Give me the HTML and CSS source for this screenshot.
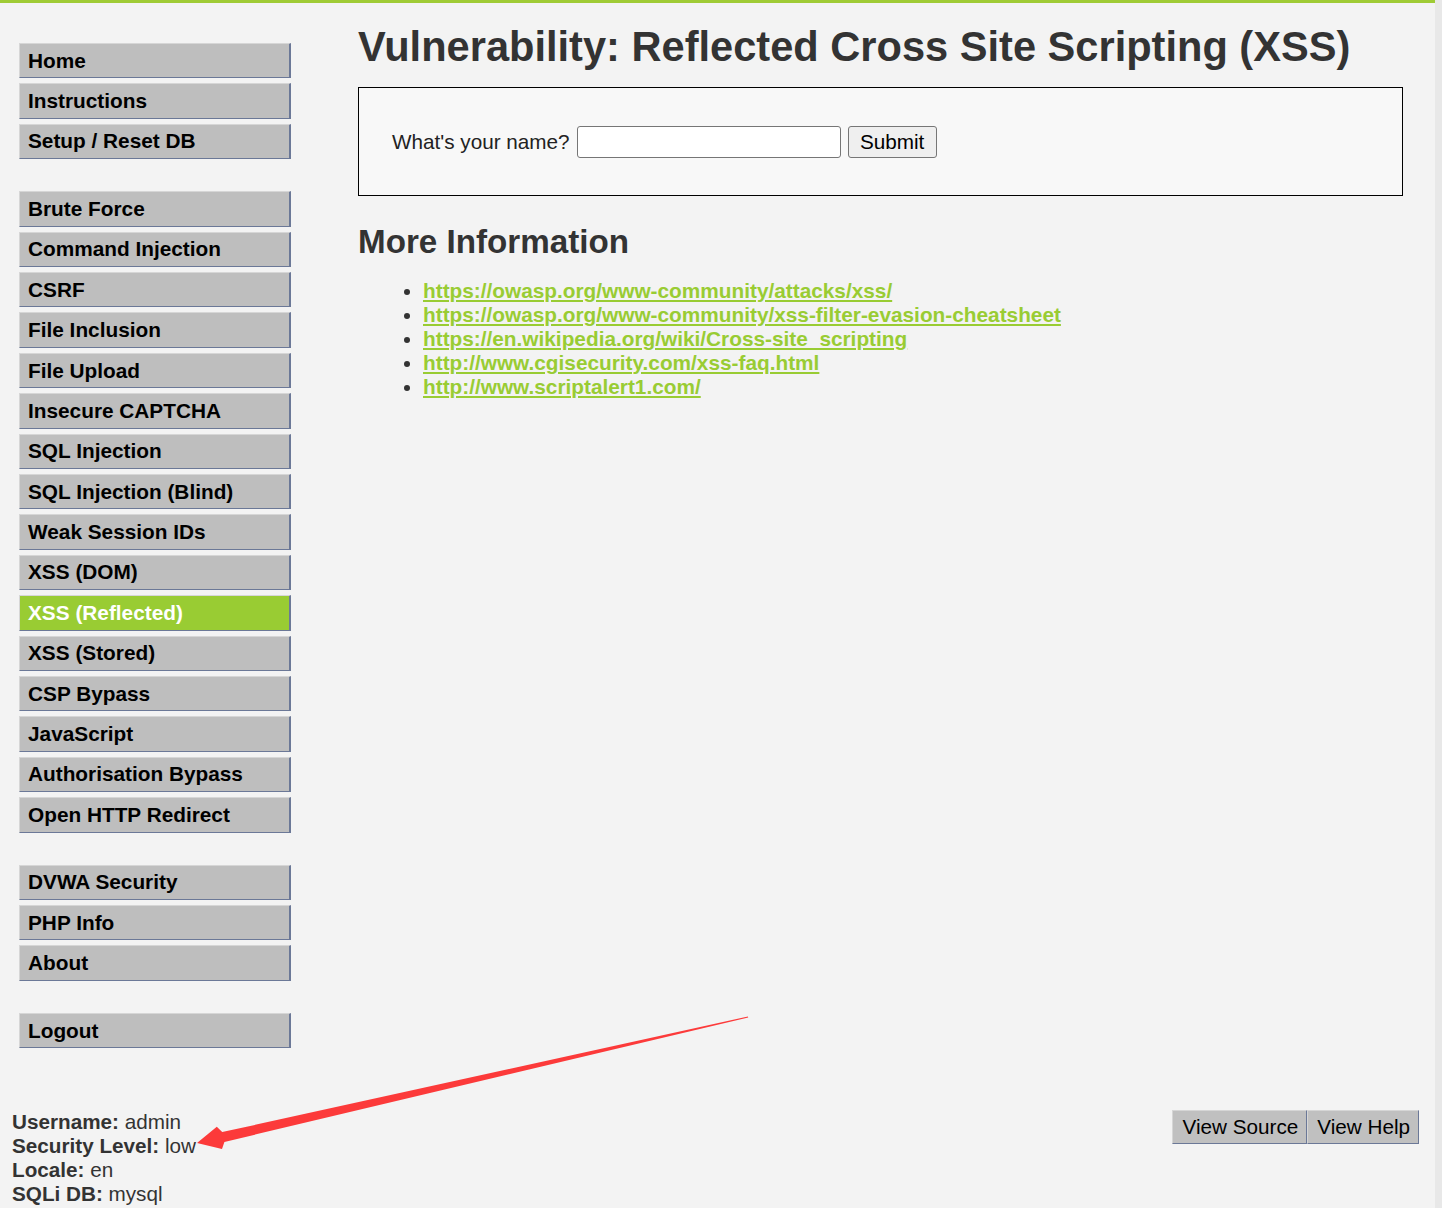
FILE: index.html
```html
<!DOCTYPE html>
<html lang="en">
<head>
<meta charset="utf-8">
<title>Vulnerability: Reflected Cross Site Scripting (XSS)</title>
<link rel="stylesheet" href="styles.css">
</head>
<body>
<div class="page">
  <div class="topbar"></div>
  <div class="main">
    <nav class="sidebar">
      <ul class="menu">
        <li><a href="#">Home</a></li>
        <li><a href="#">Instructions</a></li>
        <li><a href="#">Setup / Reset DB</a></li>
      </ul>
      <ul class="menu">
        <li><a href="#">Brute Force</a></li>
        <li><a href="#">Command Injection</a></li>
        <li><a href="#">CSRF</a></li>
        <li><a href="#">File Inclusion</a></li>
        <li><a href="#">File Upload</a></li>
        <li><a href="#">Insecure CAPTCHA</a></li>
        <li><a href="#">SQL Injection</a></li>
        <li><a href="#">SQL Injection (Blind)</a></li>
        <li><a href="#">Weak Session IDs</a></li>
        <li><a href="#">XSS (DOM)</a></li>
        <li><a href="#" class="selected">XSS (Reflected)</a></li>
        <li><a href="#">XSS (Stored)</a></li>
        <li><a href="#">CSP Bypass</a></li>
        <li><a href="#">JavaScript</a></li>
        <li><a href="#">Authorisation Bypass</a></li>
        <li><a href="#">Open HTTP Redirect</a></li>
      </ul>
      <ul class="menu">
        <li><a href="#">DVWA Security</a></li>
        <li><a href="#">PHP Info</a></li>
        <li><a href="#">About</a></li>
      </ul>
      <ul class="menu last">
        <li><a href="#">Logout</a></li>
      </ul>
    </nav>
    <main class="content">
      <h1 class="title">Vulnerability: Reflected Cross Site Scripting (XSS)</h1>
      <div class="vuln-box">
        <form class="name-form">
          <label class="name-label" for="name">What's your name?</label>
          <input class="name-input" id="name" type="text">
          <button class="submit-btn" type="button">Submit</button>
        </form>
      </div>
      <h2 class="subtitle">More Information</h2>
      <ul class="links">
        <li><a href="#">https://owasp.org/www-community/attacks/xss/</a></li>
        <li><a href="#">https://owasp.org/www-community/xss-filter-evasion-cheatsheet</a></li>
        <li><a href="#">https://en.wikipedia.org/wiki/Cross-site_scripting</a></li>
        <li><a href="#">http://www.cgisecurity.com/xss-faq.html</a></li>
        <li><a href="#">http://www.scriptalert1.com/</a></li>
      </ul>
    </main>
  </div>
  <footer class="footer">
    <div class="sysinfo">
      <div><b>Username:</b> admin</div>
      <div><b>Security Level:</b> low</div>
      <div><b>Locale:</b> en</div>
      <div><b>SQLi DB:</b> mysql</div>
    </div>
    <div class="view-buttons">
      <a href="#" class="view-btn">View Source</a><a href="#" class="view-btn">View Help</a>
    </div>
  </footer>
  <svg class="arrow" viewBox="0 0 1435 1208" width="1435" height="1208" aria-hidden="true">
    <polygon fill="#fc3a3a" points="197,1143 216.8,1126.7 222.2,1132.1 747.9,1016.6 748.2,1017.4 224.4,1141.9 222,1149.1"/>
  </svg>
</div>
</body>
</html>
```
FILE: styles.css
```css
html, body {
  margin: 0;
  padding: 0;
}
body {
  background: #e8e8e8;
  font-family: "Liberation Sans", Arial, sans-serif;
  color: #333;
}
.page {
  position: relative;
  width: 1435px;
  min-height: 1208px;
  background: #f3f3f3;
  display: flex;
  flex-direction: column;
}
.topbar {
  height: 3px;
  background: #9fcb35;
}
.main {
  display: flex;
  align-items: flex-start;
}
.sidebar {
  margin-left: 19px;
  width: 272px;
  padding-top: 40px;
}
.menu {
  list-style: none;
  margin: 0 0 32.1px 0;
  padding: 0;
}
.menu.last {
  margin-bottom: 0;
}
.menu li {
  margin-bottom: 5px;
}
.menu a {
  display: flex;
  align-items: center;
  box-sizing: border-box;
  height: 35.4px;
  padding-left: 8px;
  background: #bebebe;
  color: #000;
  font-weight: bold;
  font-size: 20.8px;
  text-decoration: none;
  border-top: 1px solid #d6d6d6;
  border-left: 1px solid #d6d6d6;
  border-right: 2px solid #6b7897;
  border-bottom: 1px solid #6b7897;
}
.menu a.selected {
  background: #99cc33;
  color: #fff;
}
.content {
  margin-left: 67px;
  width: 1045px;
  padding-top: 20px;
}
.title {
  margin: 0;
  font-size: 41.6px;
  line-height: 48px;
  font-weight: bold;
  color: #333;
}
.vuln-box {
  margin-top: 16px;
  border: 1px solid #000;
  background: #f8f8f8;
  height: 107px;
  display: flex;
  align-items: center;
  padding-left: 33px;
}
.name-form {
  display: flex;
  align-items: center;
  margin: 0;
}
.name-label {
  font-size: 20.7px;
  color: #222;
  margin-right: 7px;
}
.name-input {
  box-sizing: border-box;
  width: 264px;
  height: 32px;
  border: 1px solid #767676;
  border-radius: 3px;
  background: #fff;
  margin: 0 7px 0 0;
  padding: 0 4px;
  font-family: inherit;
  font-size: 20px;
}
.submit-btn {
  box-sizing: border-box;
  height: 32px;
  width: 89px;
  border: 1px solid #767676;
  border-radius: 3px;
  background: #efefef;
  color: #000;
  font-family: inherit;
  font-size: 20.7px;
  padding: 0;
}
.subtitle {
  margin: 27px 0 0 0;
  font-size: 33.2px;
  line-height: 38px;
  font-weight: bold;
  color: #333;
}
.links {
  margin: 18px 0 0 0;
  padding-left: 65px;
  font-size: 20.8px;
  line-height: 24px;
  color: #333;
}
.links a {
  color: #99cc33;
  font-weight: bold;
  text-decoration: underline;
}
.footer {
  margin-top: 56.6px;
  display: flex;
  justify-content: space-between;
  align-items: flex-start;
  padding: 0 16px 0 12px;
}
.sysinfo {
  font-size: 20.7px;
  line-height: 24px;
  color: #333;
}
.sysinfo b {
  font-weight: bold;
}
.view-buttons {
  display: flex;
}
.view-btn {
  display: flex;
  align-items: center;
  box-sizing: border-box;
  height: 34px;
  padding: 0 8px 0 9px;
  background: #c0c0c0;
  color: #000;
  font-size: 20.7px;
  text-decoration: none;
  border-top: 1px solid #d6d6d6;
  border-left: 1px solid #d6d6d6;
  border-right: 1px solid #6b7897;
  border-bottom: 1px solid #6b7897;
}
.arrow {
  position: absolute;
  left: 0;
  top: 0;
  pointer-events: none;
}
```
